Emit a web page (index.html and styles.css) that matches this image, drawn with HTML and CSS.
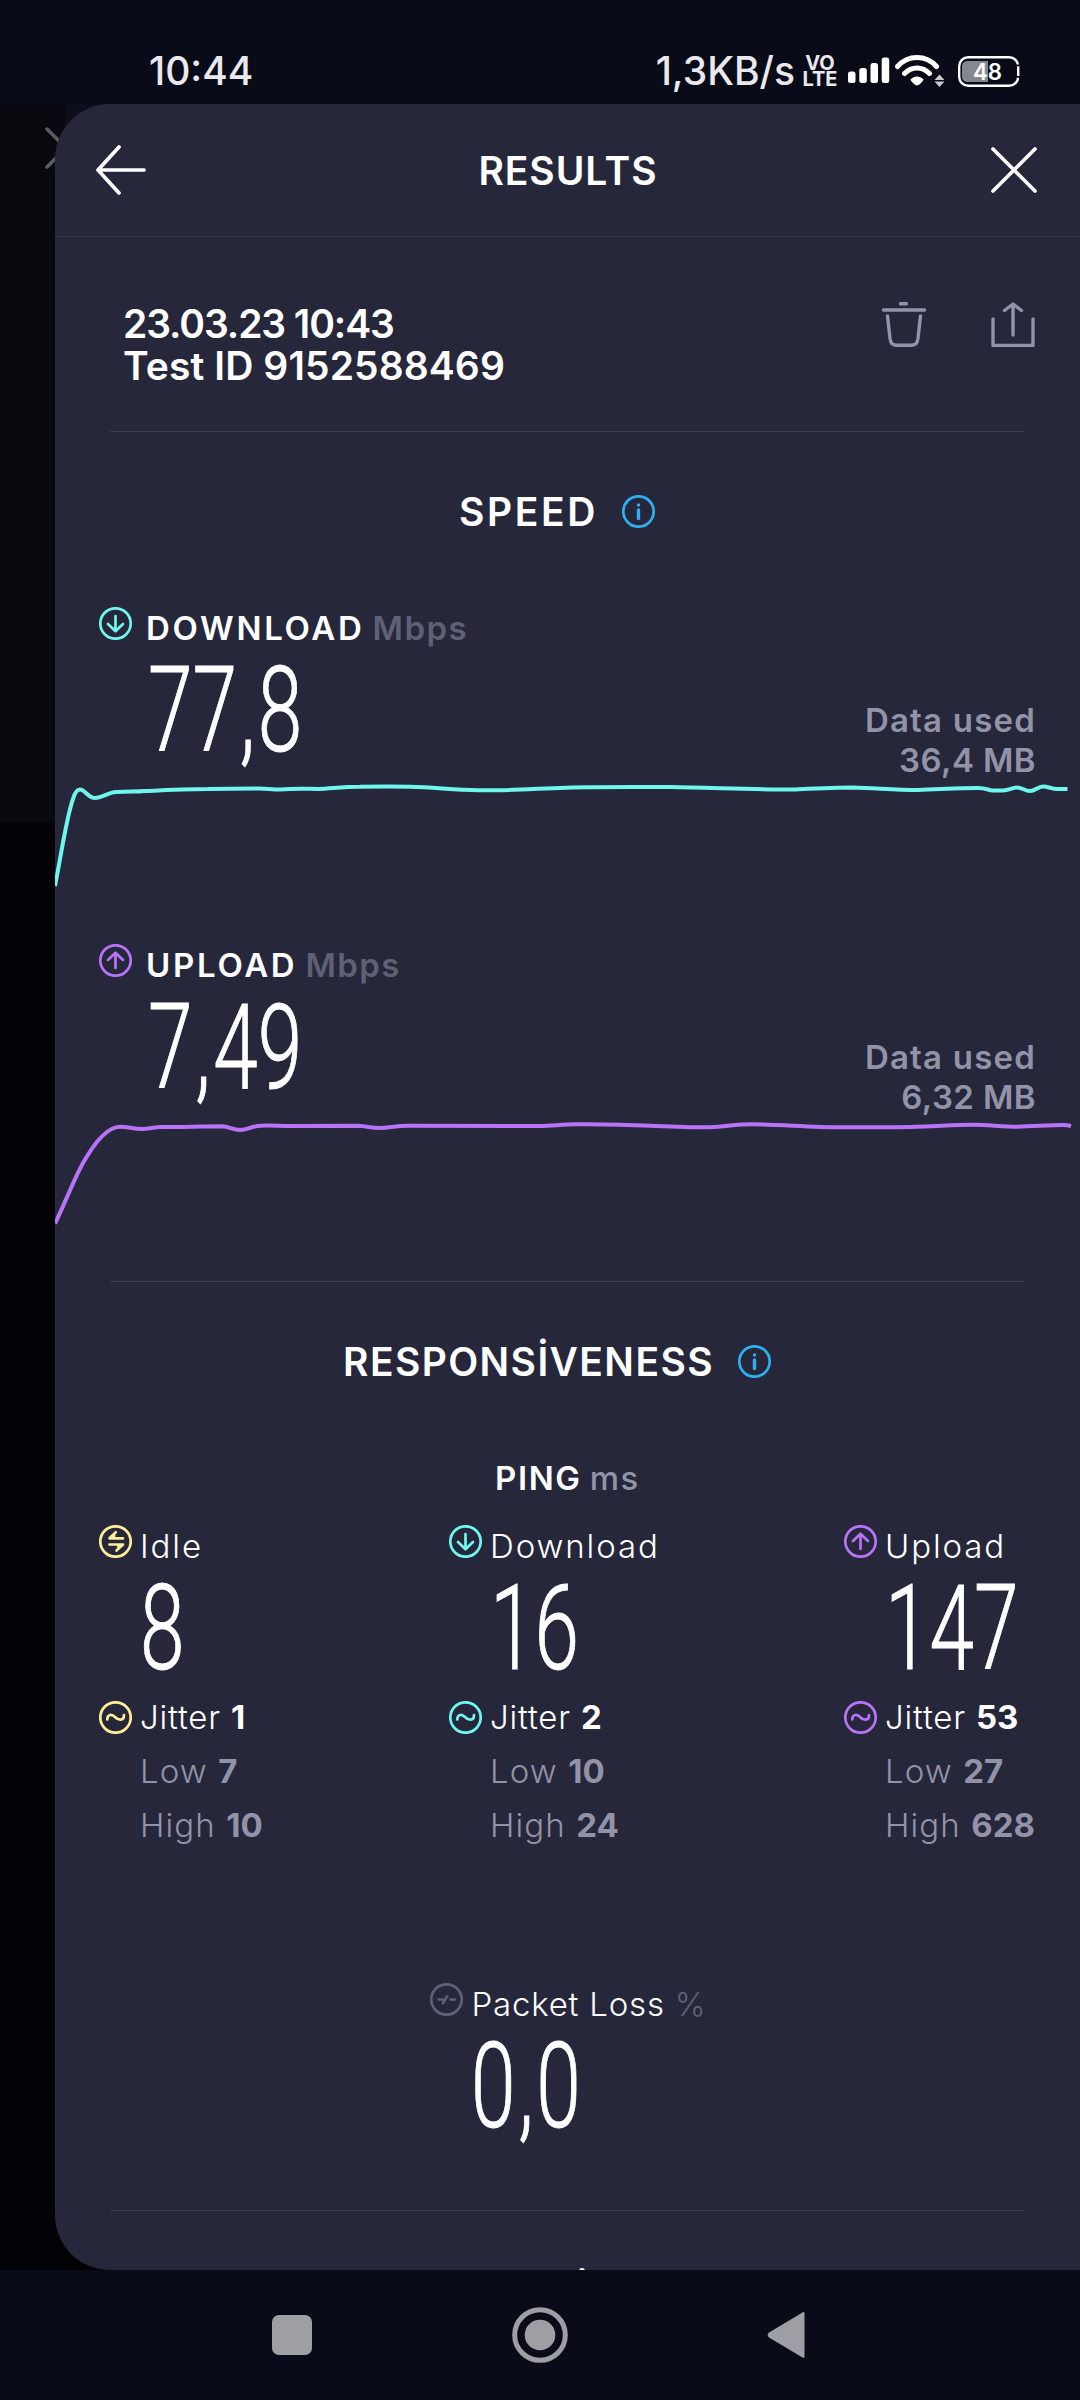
FILE: index.html
```html
<!DOCTYPE html>
<html lang="tr">
<head>
  <meta charset="UTF-8" />
  <meta name="viewport" content="width=device-width, initial-scale=1.0"/>
  <title>Results</title>
  <link rel="stylesheet" href="styles.css">
</head>
<body>

<!-- shared icons -->
<svg class="sprite" aria-hidden="true">
  <symbol id="i-down" viewBox="0 0 33 33"><circle cx="16.5" cy="16.5" r="15.2"/><path d="M16.5 9v15M9 17l7.5 7.3L24 17"/></symbol>
  <symbol id="i-up" viewBox="0 0 33 33"><circle cx="16.5" cy="16.5" r="15.2"/><path d="M16.5 24V9M9 16l7.5-7.3L24 16"/></symbol>
  <symbol id="i-jitter" viewBox="0 0 33 33"><circle cx="16.5" cy="16.5" r="15.2"/><path d="M8.3 18.5c0-5.5 4.7-5.8 7.7-2.5s9 4.5 9-2"/></symbol>
  <symbol id="i-idle" viewBox="0 0 33 33"><circle cx="16.5" cy="16.5" r="15.2"/><path d="M24 13.3H10.5L16.8 7.3M15 13.3v-3.5M10.5 19.5H24L17.5 25.5M19.5 19.5v3.5"/></symbol>
  <symbol id="i-info" viewBox="0 0 33 33"><circle cx="16.5" cy="16.5" r="15.2"/><path class="stem" d="M16.5 15v8.5M16.5 9.9v.1"/></symbol>
  <symbol id="i-loss" viewBox="0 0 33 33"><circle cx="16.5" cy="16.5" r="15.2"/><path d="M8.5 16.5h5M20.5 16.5h4.5M13 20l4-6.5"/></symbol>
</svg>

<div class="screen">

  <div class="statusbar">
    <span class="clock">10:44</span>
    <div class="status-right">
      <span class="net">1,3KB/s</span>
      <span class="volte"><span>VO</span><span>LTE</span></span>
      <svg class="signal" width="42" height="26" viewBox="0 0 42 26">
        <rect x="0" y="14.5" width="7.5" height="11.5" rx="2.5"/>
        <rect x="11.3" y="11" width="7.5" height="15" rx="2.5"/>
        <rect x="22.5" y="6" width="7.5" height="20" rx="2.5"/>
        <rect x="33.7" y="0.5" width="7.5" height="25.5" rx="2.5"/>
      </svg>
      <svg class="wifi" width="50" height="34" viewBox="0 0 50 34">
        <path class="arc" d="M2.5 12.5C13 .5 31 .5 41.5 12.5M9.5 19.5c7-7.5 18-7.5 25 0"/>
        <path d="M15.5 25.5c3.8-4 9.2-4 13 0 0 1.5-4.5 6-6.5 6s-6.5-4.5-6.5-6z"/>
        <path class="updown" d="M44.5 20.5l5 5.500h-10zM44.5 33l5-5.500h-10z"/>
      </svg>
      <svg class="battery" width="62" height="31" viewBox="0 0 62 31">
        <path class="fill" d="M11 5h19v21H11c-5 0-7-2-7-6v-9c0-4 2-6 7-6z"/>
        <rect class="shell" x="1.2" y="1.2" width="59" height="28.6" rx="9"/>
        <path class="gap" d="M60.2 8.5v1.8M60.2 20v1.8"/>
        <text x="15" y="23.5" textLength="29" lengthAdjust="spacingAndGlyphs">48</text>
      </svg>
    </div>
  </div>

  <div class="main">
    <div class="behind"></div>
    <svg class="behind-x" width="42" height="42" viewBox="0 0 42 42"><path d="M2 2l38 38M40 2L2 40"/></svg>

    <div class="panel">
      <div class="header">
        <svg class="back" width="50" height="50" viewBox="0 0 50 50"><path d="M48 25H2M23 2L2 25l21 23"/></svg>
        <h1>RESULTS</h1>
        <svg class="close" width="46" height="46" viewBox="0 0 46 46"><path d="M2 2l42 42M44 2L2 44"/></svg>
      </div>

      <div class="meta">
        <div class="meta-text">
          <div class="date">23.03.23 10:43</div>
          <div class="test-id">Test ID 9152588469</div>
        </div>
        <div class="actions">
          <svg width="44" height="45" viewBox="0 0 44 45"><path d="M18.5 1.7h6M1.5 8h41M5.5 14l2.6 23c.6 4 2.5 6.3 6.4 6.3h15c3.9 0 5.8-2.3 6.4-6.3l2.6-23"/></svg>
          <svg width="44" height="45" viewBox="0 0 44 45"><path d="M2 17v26.5h40V17M22 33V2M13.5 8.5L22 2l8.5 6.5"/></svg>
        </div>
      </div>

      <div class="divider"></div>

      <div class="section-title">
        <h2 class="t-speed">SPEED</h2>
        <svg class="icon blue"><use href="#i-info"/></svg>
      </div>

      <div class="metric">
        <div class="metric-top">
          <div class="metric-main">
            <div class="metric-label">
              <svg class="icon teal"><use href="#i-down"/></svg>
              <span class="name">DOWNLOAD</span><span class="unit">Mbps</span>
            </div>
            <div class="big"><span>77<i>,</i>8</span></div>
          </div>
          <div class="used">Data used<br><span class="amount">36,4 MB</span></div>
        </div>
        <svg class="chart teal" width="1025" height="120" viewBox="55 780 1025 120">
          <path d="M55 886C62 850 67 815 73 799C75 792 77 789.5 80 789.5C85 789.5 88 798 95 798C102 798 108 792.5 116 792C130 791 135 792 145 791C170 790 190 789 208 789C230 788.5 240 788.5 259 788.5C266 788.5 272 789.5 280 789.5C288 789.5 293 788.7 301 788.7C308 788.7 311 789 318 789C332 788.5 342 786.8 360 786.8C380 786.3 395 786.3 410 786.8C435 787.5 455 790 478 790.2H503C530 789.5 560 787.3 587 787.2C615 786.8 640 787 670 787C710 787.5 750 789.5 793 789.5C815 788.5 835 787.5 853 787.5C875 788 895 790 918 790C940 789.3 960 788 978 788C987 788 988 790.5 993 790.5H1003C1009 790.5 1012 787.5 1017 787.5C1022 787.5 1025 791 1030 791C1035 791 1038 786.5 1043 786.5C1048 786.5 1052 789 1057 789H1067.5"/>
        </svg>
      </div>

      <div class="metric">
        <div class="metric-top">
          <div class="metric-main">
            <div class="metric-label">
              <svg class="icon purple"><use href="#i-up"/></svg>
              <span class="name">UPLOAD</span><span class="unit">Mbps</span>
            </div>
            <div class="big"><span>7<i>,</i>49</span></div>
          </div>
          <div class="used">Data used<br><span class="amount">6,32 MB</span></div>
        </div>
        <svg class="chart purple" width="1025" height="120" viewBox="55 1117 1025 120">
          <path d="M55 1223.5C66 1201 74 1179 83 1163C92 1147 106 1127 120 1126.7C128 1126.7 133 1129 142 1129C149 1129 154 1127 161 1127C182 1127 202 1126.3 222 1126.3C229 1126.6 233 1130 240 1130C248 1130 251 1126 261 1125.7C271 1125.3 280 1126 290 1126L358 1125.7C367 1126 371 1128 379 1128C389 1128 395 1125.7 408 1125.7L540 1126C552 1126 562 1124.3 576 1124.3C590 1124 605 1124.3 620 1124.7C650 1125.5 680 1127.3 703 1127.3C722 1127.3 734 1124.3 752 1124.3C780 1124.5 810 1127.3 840 1127.3C865 1127.5 885 1127.3 910 1127C935 1126.5 953 1124.7 973 1124.7C990 1124.7 1000 1126.7 1018 1126.7C1033 1126.7 1047 1125 1063 1125C1067 1125 1069 1125.5 1071 1126"/>
        </svg>
      </div>

      <div class="divider after-chart"></div>

      <div class="section-title">
        <h2 class="t-resp">RESPONSİVENESS</h2>
        <svg class="icon blue"><use href="#i-info"/></svg>
      </div>

      <div class="ping-title"><span>PING</span><span class="ms">ms</span></div>

      <div class="ping-grid">
        <div class="ping">
          <div class="row head"><svg class="icon yellow"><use href="#i-idle"/></svg><span>Idle</span></div>
          <div class="big"><span>8</span></div>
          <div class="row jitter"><svg class="icon yellow"><use href="#i-jitter"/></svg><span>Jitter <b>1</b></span></div>
          <div class="row dim"><span>Low <b>7</b></span></div>
          <div class="row dim"><span>High <b>10</b></span></div>
        </div>
        <div class="ping">
          <div class="row head"><svg class="icon teal"><use href="#i-down"/></svg><span>Download</span></div>
          <div class="big"><span>16</span></div>
          <div class="row jitter"><svg class="icon teal"><use href="#i-jitter"/></svg><span>Jitter <b>2</b></span></div>
          <div class="row dim"><span>Low <b>10</b></span></div>
          <div class="row dim"><span>High <b>24</b></span></div>
        </div>
        <div class="ping">
          <div class="row head"><svg class="icon purple"><use href="#i-up"/></svg><span>Upload</span></div>
          <div class="big"><span>147</span></div>
          <div class="row jitter"><svg class="icon purple"><use href="#i-jitter"/></svg><span>Jitter <b>53</b></span></div>
          <div class="row dim"><span>Low <b>27</b></span></div>
          <div class="row dim"><span>High <b>628</b></span></div>
        </div>
      </div>

      <div class="loss">
        <div class="ping">
          <div class="row head"><svg class="icon gray"><use href="#i-loss"/></svg><span>Packet Loss <em>%</em></span></div>
          <div class="big"><span>0<i>,</i>0</span></div>
        </div>
      </div>

      <div class="divider"></div>
      <div class="next-section"></div>
    </div>
  </div>

  <div class="navbar">
    <svg width="40" height="40" viewBox="0 0 40 40"><rect width="40" height="40" rx="7"/></svg>
    <svg width="56" height="56" viewBox="0 0 56 56"><circle class="ring" cx="28" cy="28" r="25.3"/><circle cx="28" cy="28" r="15.3"/></svg>
    <svg width="38" height="48" viewBox="0 0 38 48"><path d="M35.5 1.5c1-.8 2-.3 2 1v43c0 1.3-1 1.8-2 1L2 26.5c-1.8-1.5-1.8-3.5 0-5z"/></svg>
  </div>
</div>

</body>
</html>
```

FILE: styles.css
```css
* { margin: 0; padding: 0; box-sizing: border-box; }

body {
  background: #090b18;
  font-family: Inter, 'Noto Sans', sans-serif;
  color: #fff;
}

svg { display: block; flex-shrink: 0; }

.sprite { position: absolute; width: 0; height: 0; }

.screen {
  width: 1080px;
  height: 2400px;
  display: flex;
  flex-direction: column;
  overflow: hidden;
}

/* status bar */
.statusbar {
  height: 104px;
  padding: 38px 60px 0 149px;
  display: flex;
  justify-content: space-between;
  font-size: 39px;
  line-height: 66px;
  color: #e9e8ec;
}

.statusbar > * { height: 66px; }

.clock { font-weight: 500; }

.status-right {
  display: flex;
  align-items: center;
}

.net { font-weight: 500; margin-right: 8px; }

.volte {
  display: flex;
  flex-direction: column;
  align-items: center;
  width: 34px;
  margin-right: 11px;
  font-size: 20px;
  font-weight: 700;
  line-height: 16.5px;
}

.signal { fill: #fff; margin: -2px 5px 0 0; }

.wifi { fill: #fff; margin-right: 13px; }
.wifi .arc { fill: none; stroke: #fff; stroke-width: 5; stroke-linecap: round; }
.wifi .updown { fill: #c8c8cc; }

.battery .fill { fill: #85868e; }
.battery .shell { fill: none; stroke: #fff; stroke-width: 2.4; }
.battery .gap { stroke: #090b18; stroke-width: 4; }
.battery text { fill: #fff; font-size: 23px; font-weight: 600; }

/* area behind the sliding panel */
.main {
  position: relative;
  height: 2166px;
  padding-left: 55px;
  background: linear-gradient(#0d0d1c, #0b0b18 30%, #020208 60%, #020205);
}

.behind {
  position: absolute;
  left: 0;
  top: 0;
  width: 65px;
  height: 100%;
  background: linear-gradient(#08080e 719px, #020207 719px);
}

.behind-x {
  position: absolute;
  left: 45px;
  top: 23px;
  fill: none;
  stroke: #5c5c5e;
  stroke-width: 3.5;
  stroke-linecap: round;
}

.panel {
  position: relative;
  height: 2166px;
  background: #26273a;
  border-radius: 55px 0 0 55px;
  overflow: hidden;
}

.header {
  height: 133px;
  padding: 0 43px 0 41px;
  border-bottom: 1px solid #3a3b4e;
  display: grid;
  grid-template-columns: 50px 1fr 50px;
  align-items: center;
}

.header svg, .actions svg {
  fill: none;
  stroke: #fff;
  stroke-width: 3.7;
  stroke-linecap: round;
  stroke-linejoin: round;
}

.close { justify-self: end; }

h1, h2 {
  font-size: 39px;
  font-weight: 600;
  line-height: 42px;
}

h1 { text-align: center; padding: 2px 0 0 3px; letter-spacing: .9px; }

.meta {
  padding: 66px 45px 44px 68px;
  display: flex;
  justify-content: space-between;
  font-size: 39px;
  font-weight: 600;
  line-height: 42px;
}

.date { letter-spacing: -1.1px; }
.test-id { letter-spacing: .1px; }

.actions { display: flex; gap: 65px; margin-top: -1px; }
.actions svg { stroke: #9293a9; stroke-width: 3.4; }

.divider {
  height: 1px;
  margin: 0 55px;
  background: #3a3b4e;
}

.after-chart { margin-top: 44px; }

.section-title {
  height: 159px;
  padding-right: 21px;
  display: flex;
  justify-content: center;
  align-items: center;
  gap: 24px;
}

.t-speed { letter-spacing: 2.6px; }
.t-resp { letter-spacing: 1.4px; }

.icon {
  width: 33px;
  height: 33px;
  fill: none;
  stroke: currentColor;
  stroke-width: 2.7;
  stroke-linecap: round;
  stroke-linejoin: round;
}

.stem { stroke-width: 3.4; }

.blue { color: #2eb0f0; }
.teal { color: #6ff7ee; }
.purple { color: #b873f8; }
.yellow { color: #fdee97; }
.gray { color: #5f6075; }

/* download / upload */
.metric { margin-bottom: 28px; }

.metric-top {
  height: 189px;
  padding: 0 44px;
  display: flex;
  justify-content: space-between;
  align-items: flex-end;
}

.metric-main { height: 189px; }

.metric-label {
  height: 73px;
  display: flex;
  align-items: center;
  font-size: 33px;
  font-weight: 600;
}

.metric-label .icon { margin: -8px 14px 0 0; }
.name { letter-spacing: 2.7px; }
.unit { color: #5f6075; margin-left: 8px; font-weight: 600; letter-spacing: 1.4px; }

.metric .big { margin-left: 49px; line-height: 94px; }

.used {
  text-align: right;
  font-size: 33px;
  font-weight: 600;
  line-height: 40px;
  letter-spacing: 1.2px;
  color: #9293a9;
}

.amount { letter-spacing: .4px; }

.chart path {
  fill: none;
  stroke: currentColor;
  stroke-width: 4;
}

/* tall narrow digits */
.big {
  font-family: Roboto, sans-serif;
  font-size: 118px;
  font-weight: 300;
  line-height: 101px;
  -webkit-text-stroke: 1px #fff;
}

.big span {
  display: inline-block;
  white-space: nowrap;
  transform: scaleX(.68);
  transform-origin: left;
}

.big i { font-style: normal; margin: 0 4px; }

/* ping */
.ping-title {
  height: 73px;
  display: flex;
  justify-content: center;
  align-items: center;
  gap: 8px;
  font-size: 33px;
  font-weight: 600;
  letter-spacing: 1.6px;
}

.ms { color: #9293a9; font-weight: 550; }

.ping-grid {
  display: grid;
  grid-template-columns: 350px 395px auto;
  padding-left: 44px;
}

.row {
  height: 54px;
  padding-left: 41px;
  display: flex;
  align-items: center;
  font-size: 33px;
  font-weight: 350;
  letter-spacing: .8px;
  white-space: pre;
}

.row .icon { margin-left: -41px; margin-right: 8px; }
.row b { font-weight: 650; letter-spacing: 0; }
.row em { font-style: normal; color: #5f6075; }

.head { height: 63px; letter-spacing: 1.9px; }
.head .icon { margin-top: -8px; }
.jitter { margin-top: 12px; }
.dim { color: #9293a9; font-weight: 300; letter-spacing: 1.1px; }

.ping .big { height: 101px; line-height: 104px; margin-left: 41px; }

.loss {
  margin: 120px 0 74px;
  padding-left: 2px;
  display: flex;
  justify-content: center;
}

.loss .head { letter-spacing: .8px; }

/* top of the next heading, cut by the screen edge */
.next-section {
  width: 6px;
  height: 6px;
  margin: 57px 0 0 524px;
  border-radius: 50%;
  background: #fff;
}

/* system navigation */
.navbar {
  height: 130px;
  padding: 0 275px 0 272px;
  display: flex;
  justify-content: space-between;
  align-items: center;
  fill: #9e9fa4;
}

.ring { fill: none; stroke: #9e9fa4; stroke-width: 5; }
```
